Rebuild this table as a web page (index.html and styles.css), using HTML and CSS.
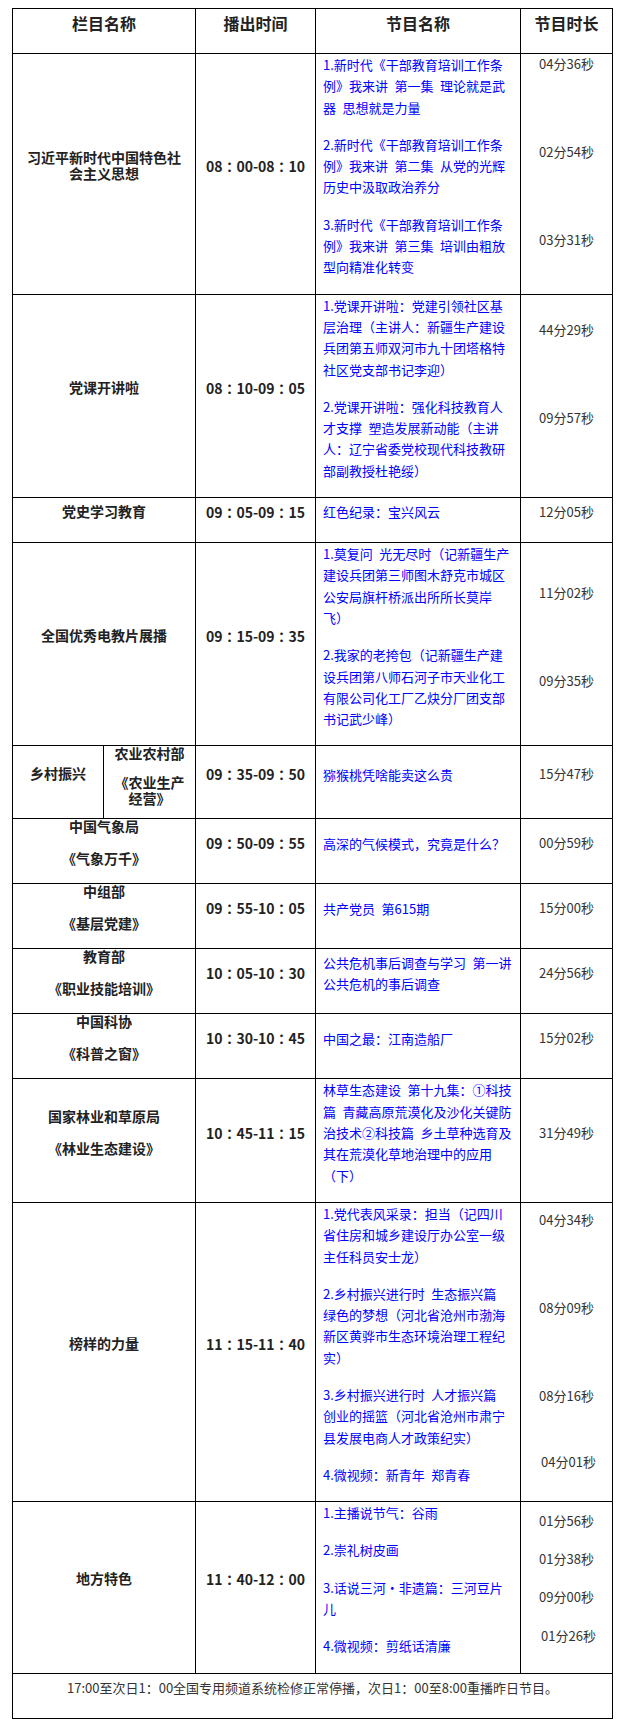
FILE: index.html
```html
<!DOCTYPE html>
<html lang="zh-CN">
<head>
<meta charset="utf-8">
<title>节目单</title>
<link rel="stylesheet" href="styles.css">
</head>
<body>
<div class="page">
<table class="sched">
  <colgroup>
    <col class="c1a"><col class="c1b"><col class="c2"><col class="c3"><col class="c4">
  </colgroup>
  <tr class="hd">
    <td colspan="2"><p>栏目名称</p></td>
    <td><p>播出时间</p></td>
    <td><p>节目名称</p></td>
    <td><p>节目时长</p></td>
  </tr>
  <tr>
    <td colspan="2" class="name"><p>习近平新时代中国特色社<br>会主义思想</p></td>
    <td class="time"><p>08：00-08：10</p></td>
    <td class="prog">
      <p>1.新时代《干部教育培训工作条<br>例》我来讲&ensp;第一集&ensp;理论就是武<br>器&ensp;思想就是力量</p>
      <p>2.新时代《干部教育培训工作条<br>例》我来讲&ensp;第二集&ensp;从党的光辉<br>历史中汲取政治养分</p>
      <p>3.新时代《干部教育培训工作条<br>例》我来讲&ensp;第三集&ensp;培训由粗放<br>型向精准化转变</p>
    </td>
    <td class="dur top pt2">
      <p>04分36秒</p>
      <p class="m72">02分54秒</p>
      <p class="m72">03分31秒</p>
    </td>
  </tr>
  <tr>
    <td colspan="2" class="name"><p>党课开讲啦</p></td>
    <td class="time"><p>08：10-09：05</p></td>
    <td class="prog">
      <p>1.党课开讲啦：党建引领社区基<br>层治理（主讲人：新疆生产建设<br>兵团第五师双河市九十团塔格特<br>社区党支部书记李迎）</p>
      <p>2.党课开讲啦：强化科技教育人<br>才支撑&ensp;塑造发展新动能（主讲<br>人：辽宁省委党校现代科技教研<br>部副教授杜艳绥）</p>
    </td>
    <td class="dur top pt27">
      <p>44分29秒</p>
      <p class="m72">09分57秒</p>
    </td>
  </tr>
  <tr class="short">
    <td colspan="2" class="name"><p>党史学习教育</p></td>
    <td class="time"><p>09：05-09：15</p></td>
    <td class="prog"><p>红色纪录：宝兴风云</p></td>
    <td class="dur"><p>12分05秒</p></td>
  </tr>
  <tr>
    <td colspan="2" class="name"><p>全国优秀电教片展播</p></td>
    <td class="time"><p>09：15-09：35</p></td>
    <td class="prog">
      <p>1.莫复问&ensp;光无尽时（记新疆生产<br>建设兵团第三师图木舒克市城区<br>公安局旗杆桥派出所所长莫岸<br>飞）</p>
      <p>2.我家的老挎包（记新疆生产建<br>设兵团第八师石河子市天业化工<br>有限公司化工厂乙炔分厂团支部<br>书记武少峰）</p>
    </td>
    <td class="dur top pt41">
      <p>11分02秒</p>
      <p class="m72">09分35秒</p>
    </td>
  </tr>
  <tr>
    <td class="name"><p>乡村振兴</p></td>
    <td class="name sub"><p class="sub-a">农业农村部</p><p class="sub-b">《农业生产<br>经营》</p></td>
    <td class="time"><p>09：35-09：50</p></td>
    <td class="prog"><p>猕猴桃凭啥能卖这么贵</p></td>
    <td class="dur"><p>15分47秒</p></td>
  </tr>
  <tr>
    <td colspan="2" class="name"><p>中国气象局</p><p>《气象万千》</p></td>
    <td class="time"><p>09：50-09：55</p></td>
    <td class="prog"><p>高深的气候模式，究竟是什么？</p></td>
    <td class="dur"><p>00分59秒</p></td>
  </tr>
  <tr>
    <td colspan="2" class="name"><p>中组部</p><p>《基层党建》</p></td>
    <td class="time"><p>09：55-10：05</p></td>
    <td class="prog"><p>共产党员&ensp;第615期</p></td>
    <td class="dur"><p>15分00秒</p></td>
  </tr>
  <tr>
    <td colspan="2" class="name"><p>教育部</p><p>《职业技能培训》</p></td>
    <td class="time"><p>10：05-10：30</p></td>
    <td class="prog"><p>公共危机事后调查与学习&ensp;第一讲<br>公共危机的事后调查</p></td>
    <td class="dur"><p>24分56秒</p></td>
  </tr>
  <tr>
    <td colspan="2" class="name"><p>中国科协</p><p>《科普之窗》</p></td>
    <td class="time"><p>10：30-10：45</p></td>
    <td class="prog"><p>中国之最：江南造船厂</p></td>
    <td class="dur"><p>15分02秒</p></td>
  </tr>
  <tr>
    <td colspan="2" class="name"><p>国家林业和草原局</p><p>《林业生态建设》</p></td>
    <td class="time"><p>10：45-11：15</p></td>
    <td class="prog"><p>林草生态建设&ensp;第十九集：①科技<br>篇&ensp;青藏高原荒漠化及沙化关键防<br>治技术②科技篇&ensp;乡土草种选育及<br>其在荒漠化草地治理中的应用<br>（下）</p></td>
    <td class="dur"><p>31分49秒</p></td>
  </tr>
  <tr>
    <td colspan="2" class="name"><p>榜样的力量</p></td>
    <td class="time"><p>11：15-11：40</p></td>
    <td class="prog">
      <p>1.党代表风采录：担当（记四川<br>省住房和城乡建设厅办公室一级<br>主任科员安士龙）</p>
      <p>2.乡村振兴进行时&ensp;生态振兴篇<br>绿色的梦想（河北省沧州市渤海<br>新区黄骅市生态环境治理工程纪<br>实）</p>
      <p>3.乡村振兴进行时&ensp;人才振兴篇<br>创业的摇篮（河北省沧州市肃宁<br>县发展电商人才政策纪实）</p>
      <p>4.微视频：新青年&ensp;郑青春</p>
    </td>
    <td class="dur top pt9">
      <p>04分34秒</p>
      <p class="m72">08分09秒</p>
      <p class="m72">08分16秒</p>
      <p class="m50 nudge">04分01秒</p>
    </td>
  </tr>
  <tr>
    <td colspan="2" class="name"><p>地方特色</p></td>
    <td class="time"><p>11：40-12：00</p></td>
    <td class="prog">
      <p>1.主播说节气：谷雨</p>
      <p>2.崇礼树皮画</p>
      <p>3.话说三河・非遗篇：三河豆片<br>儿</p>
      <p>4.微视频：剪纸话清廉</p>
    </td>
    <td class="dur top pt11">
      <p>01分56秒</p>
      <p class="m22">01分38秒</p>
      <p class="m22">09分00秒</p>
      <p class="m23 nudge">01分26秒</p>
    </td>
  </tr>
  <tr class="short">
    <td colspan="5" class="foot"><p>17:00至次日1：00全国专用频道系统检修正常停播，次日1：00至8:00重播昨日节目。</p></td>
  </tr>
</table>
</div>
</body>
</html>
```

FILE: styles.css
```css
html, body {
  margin: 0;
  padding: 0;
  background: #ffffff;
}

body {
  font-family: "Noto Sans CJK SC", "Noto Sans", sans-serif;
  color: #222222;
}

.page {
  padding: 8px 0 16px 12px;
}

.sched {
  border-collapse: collapse;
  table-layout: fixed;
  width: 600px;
}

.c1a { width: 91px; }
.c1b { width: 92px; }
.c2 { width: 120px; }
.c3 { width: 205px; }
.c4 { width: 92px; }

.sched td {
  border: 1px solid #000000;
  padding: 0 7px;
  vertical-align: middle;
}

.sched p {
  margin: 0 0 16px;
}

.hd td {
  height: 44px;
  text-align: center;
  font-size: 16px;
  line-height: 18px;
  font-weight: 700;
  color: #222222;
}

.short td {
  height: 44px;
}

.name,
.time {
  text-align: center;
  font-size: 14px;
  line-height: 16px;
  font-weight: 700;
  color: #222222;
}

.name {
  font-family: "Liberation Sans", "Noto Sans CJK SC", sans-serif;
}

.time {
  font-family: "Noto Sans CJK TC", "Noto Sans CJK SC", sans-serif;
}

.sched .sub .sub-a {
  margin-bottom: 13px;
}

.sched .sub .sub-b {
  line-height: 16px;
  margin-bottom: 11px;
}

.prog {
  font-size: 13px;
  line-height: 21.3px;
  color: #0000ff;
}

.dur {
  text-align: center;
  font-size: 13px;
  line-height: 16px;
  color: #333333;
}

.sched .dur.top {
  vertical-align: top;
}

.sched .dur.top p {
  margin: 0;
}

.sched .dur.top p.m72 { margin-top: 72px; }
.sched .dur.top p.m50 { margin-top: 50px; }
.sched .dur.top p.m22 { margin-top: 22px; }
.sched .dur.top p.m23 { margin-top: 23px; }
.sched .dur.top p.nudge { margin-left: 4px; }

.sched .pt2 { padding-top: 1.5px; }
.sched .pt27 { padding-top: 27px; }
.sched .pt41 { padding-top: 41.5px; }
.sched .pt9 { padding-top: 9px; }
.sched .pt11 { padding-top: 11px; }

.foot {
  text-align: center;
  font-size: 13px;
  line-height: 21.3px;
  color: #333333;
}
```
